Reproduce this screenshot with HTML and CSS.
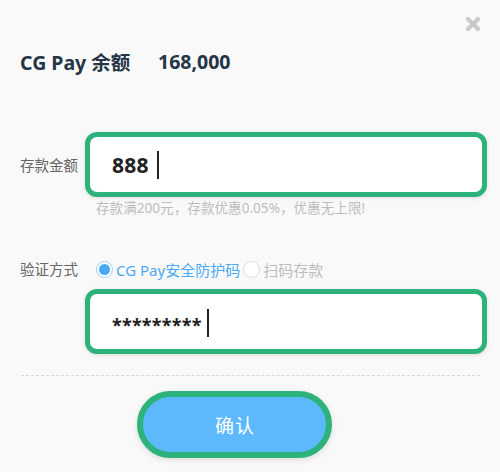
FILE: index.html
```html
<!DOCTYPE html>
<html lang="zh">
<head>
<meta charset="utf-8">
<title>CG Pay</title>
<link rel="stylesheet" href="styles.css">
</head>
<body>
<div class="dialog">
  <button class="close" aria-label="关闭">
    <svg width="16" height="16" viewBox="0 0 16 16"><path d="M3 3 L13 13 M13 3 L3 13" stroke="#c9c9c9" stroke-width="4.2" stroke-linecap="round"/></svg>
  </button>
  <div class="balance">
    <span class="balance-label">CG Pay 余额</span>
    <span class="balance-value">168,000</span>
  </div>
  <div class="field amount-field">
    <label class="field-label">存款金额</label>
    <div class="input-box">
      <span class="input-text amount">888</span><span class="caret"></span>
    </div>
  </div>
  <p class="hint">存款满200元，存款优惠0.05%，优惠无上限!</p>
  <div class="verify">
    <span class="field-label verify-label">验证方式</span>
    <span class="radio checked"><span class="dot"></span></span>
    <span class="radio-text active">CG Pay安全防护码</span>
    <span class="radio"><span class="dot"></span></span>
    <span class="radio-text">扫码存款</span>
  </div>
  <div class="field pass-field">
    <div class="input-box">
      <span class="input-text stars">*********</span><span class="caret"></span>
    </div>
  </div>
  <div class="divider"></div>
  <button class="confirm">确认</button>
</div>
</body>
</html>
```
FILE: styles.css
```css
* { box-sizing: border-box; }
html, body {
  margin: 0;
  padding: 0;
  background: #f9f9f9;
}
body {
  font-family: "Noto Sans", "Noto Sans CJK SC", sans-serif;
  width: 500px;
  height: 472px;
  overflow: hidden;
}
.dialog {
  position: relative;
  padding: 49px 13px 0 20px;
}
.close {
  position: absolute;
  top: 16px;
  right: 19px;
  width: 16px;
  height: 16px;
  padding: 0;
  border: 0;
  background: none;
  display: block;
}
.close svg { display: block; }
.balance {
  display: flex;
  align-items: center;
  height: 24px;
  font-weight: 700;
  font-size: 19.5px;
  color: #253545;
}
.balance-label { width: 138px; }
.field {
  display: flex;
  align-items: center;
}
.amount-field { margin-top: 59px; }
.field-label {
  width: 65px;
  flex: none;
  font-size: 14.5px;
  color: #666;
  line-height: 20px;
  padding-top: 1px;
}
.input-box {
  flex: none;
  width: 402px;
  height: 65px;
  background: #fff;
  border: 5px solid #2cb27a;
  border-radius: 12px;
  box-shadow: 0 1px 4px rgba(0, 0, 0, 0.12);
  display: flex;
  align-items: center;
  padding-left: 22px;
}
.input-text {
  color: #222;
  font-weight: 700;
}
.amount {
  font-size: 21px;
  letter-spacing: 0.2px;
}
.stars {
  font-size: 18px;
  letter-spacing: 0.2px;
  padding-top: 6px;
}
.caret {
  display: inline-block;
  width: 2px;
  height: 28px;
  background: #222;
  margin-left: 8px;
}
.stars + .caret { margin-left: 5px; margin-top: 2px; }
.hint {
  margin: 3px 0 0 76px;
  font-size: 13.6px;
  line-height: 16px;
  color: #bdbdbd;
}
.verify {
  display: flex;
  align-items: center;
  margin-top: 43px;
  height: 20px;
}
.verify-label {
  width: 76px;
  padding-top: 0;
}
.radio {
  width: 17px;
  height: 17px;
  border-radius: 50%;
  border: 1px solid #ddd;
  background: #fff;
  display: flex;
  align-items: center;
  justify-content: center;
  margin-right: 3px;
}
.radio.checked {
  border-color: #9fd0f7;
}
.radio.checked .dot {
  width: 11px;
  height: 11px;
  border-radius: 50%;
  background: #49a9f4;
}
.radio-text {
  font-size: 15px;
  color: #bdbdbd;
  margin-right: 3px;
}
.radio-text.active { color: #49a9f4; }
.pass-field {
  margin-top: 10px;
  padding-left: 65px;
}
.divider {
  margin: 21px 0 0 1px;
  height: 0;
  border-top: 1px dashed #d8d8d8;
  width: 459px;
}
.confirm {
  display: block;
  margin: 15px 0 0 117px;
  width: 195px;
  height: 67px;
  border: 6px solid #2cb27a;
  border-radius: 34px;
  background: #5bb9fc;
  color: #fff;
  font-family: "Noto Sans CJK SC", sans-serif;
  font-size: 19px;
  letter-spacing: 1px;
  padding: 0 0 0 1px;
  box-shadow: 0 2px 6px rgba(0, 0, 0, 0.12);
}
```
